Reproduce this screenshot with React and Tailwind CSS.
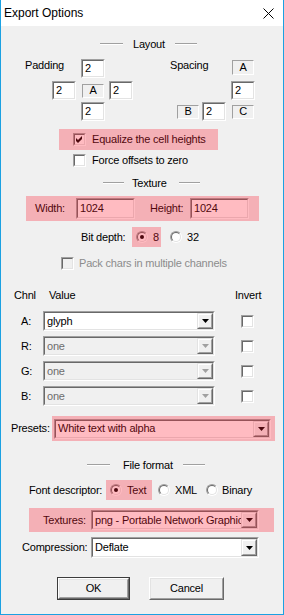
import React from 'react';

const Overlay = () => (
  <div className="pointer-events-none absolute inset-0 bg-[rgba(255,30,50,0.3)]" />
);

const Sunken = ({ className = '', inner = '', children }) => (
  <div className={`shrink-0 border border-t-[#a0a0a0] border-l-[#a0a0a0] border-b-white border-r-white ${className}`}>
    <div className={`flex h-full w-full items-center border border-t-[#696969] border-l-[#696969] border-b-[#e3e3e3] border-r-[#e3e3e3] ${inner}`}>
      {children}
    </div>
  </div>
);

const Edit = ({ value, className = '' }) => (
  <Sunken className={className} inner="bg-white pl-[2px]">
    {value}
  </Sunken>
);

const Tag = ({ label, className = '' }) => (
  <div className={`flex shrink-0 items-center justify-center border border-[#a0a0a0] border-b-white border-r-white ${className}`}>
    {label}
  </div>
);

const Combo = ({ value, disabled, className = '' }) => (
  <Sunken className={className} inner={disabled ? 'bg-[#f0f0f0] text-[#6d6d6d]' : 'bg-white'}>
    <span className="min-w-0 flex-1 overflow-hidden whitespace-nowrap pl-[2px]">{value}</span>
    <div className="h-full w-[16px] shrink-0 border border-t-[#e3e3e3] border-l-[#e3e3e3] border-b-[#696969] border-r-[#696969]">
      <div className="flex h-full w-full items-center justify-center border border-t-white border-l-white border-b-[#a0a0a0] border-r-[#a0a0a0] bg-[#f0f0f0]">
        <svg width="7" height="4" viewBox="0 0 7 4">
          <polygon points="0,0 7,0 3.5,4" fill={disabled ? '#a0a0a0' : '#000'} />
        </svg>
      </div>
    </div>
  </Sunken>
);

const Check = ({ checked, disabled, className = '' }) => (
  <Sunken className={`h-[13px] w-[13px] ${className}`} inner={`justify-center ${disabled ? 'bg-[#f0f0f0]' : 'bg-white'}`}>
    {checked && (
      <svg width="7" height="7" viewBox="0 0 7 7">
        <path d="M0 2 L2 4 L6 0 L6 3 L2 7 L0 5 Z" fill="#000" />
      </svg>
    )}
  </Sunken>
);

const Radio = ({ checked, className = '' }) => (
  <div className={`h-[12px] w-[12px] shrink-0 rounded-full border border-t-[#a0a0a0] border-l-[#a0a0a0] border-b-white border-r-white ${className}`}>
    <div className="flex h-full w-full items-center justify-center rounded-full border border-t-[#696969] border-l-[#696969] border-b-[#e3e3e3] border-r-[#e3e3e3] bg-white">
      {checked && <div className="h-[4px] w-[4px] rounded-full bg-black" />}
    </div>
  </div>
);

const Line = ({ className = '' }) => (
  <div className={`h-[2px] border-t border-b border-t-[#a0a0a0] border-b-white ${className}`} />
);

const channels = [
  { name: 'A:', value: 'glyph', disabled: false },
  { name: 'R:', value: 'one', disabled: true },
  { name: 'G:', value: 'one', disabled: true },
  { name: 'B:', value: 'one', disabled: true },
];

export default function App() {
  return (
    <div className="flex h-[615px] w-[284px] flex-col border-x border-b border-[#1ba1e2] bg-[#f0f0f0] font-['Liberation_Sans',Arial,sans-serif] text-[11px] leading-[13px] tracking-[-0.2px] text-black">
      <div className="flex h-[26px] shrink-0 items-center justify-between bg-white pl-[3px] pr-[9px] text-[12px] tracking-normal">
        <span>Export Options</span>
        <svg width="11" height="11" viewBox="0 0 11 11">
          <path d="M0.5 0.5 L10.5 10.5 M10.5 0.5 L0.5 10.5" stroke="#000" strokeWidth="1" />
        </svg>
      </div>

      {/* Layout */}
      <div className="mt-[11px] flex h-[14px] items-center">
        <Line className="ml-[99px] w-[23px]" />
        <span className="mx-[10px]">Layout</span>
        <Line className="w-[22px]" />
      </div>

      <div className="mt-[8px] flex h-[19px]">
        <span className="ml-[24px] w-[56px]">Padding</span>
        <Edit value="2" className="h-[19px] w-[24px]" />
        <span className="ml-[65px] w-[62px]">Spacing</span>
        <Tag label="A" className="mt-[1px] h-[15px] w-[22px]" />
      </div>
      <div className="mt-[3px] flex h-[19px] items-center">
        <Edit value="2" className="ml-[51px] h-[19px] w-[24px]" />
        <Tag label="A" className="ml-[6px] h-[14px] w-[22px]" />
        <Edit value="2" className="ml-[5px] h-[19px] w-[24px]" />
        <Edit value="2" className="ml-[98px] h-[19px] w-[24px]" />
      </div>
      <div className="mt-[2px] flex h-[19px] items-center">
        <Edit value="2" className="ml-[80px] h-[19px] w-[24px]" />
        <Tag label="B" className="ml-[72px] h-[14px] w-[22px]" />
        <Edit value="2" className="ml-[3px] h-[19px] w-[24px]" />
        <Tag label="C" className="ml-[6px] h-[14px] w-[22px]" />
      </div>

      <div className="relative ml-[58px] mt-[8px] flex h-[21px] w-[159px] items-center">
        <Check checked className="ml-[14px]" />
        <span className="ml-[6px]">Equalize the cell heights</span>
        <Overlay />
      </div>
      <div className="ml-[72px] mt-[3px] flex h-[15px] items-center">
        <Check />
        <span className="ml-[6px]">Force offsets to zero</span>
      </div>

      {/* Texture */}
      <div className="mt-[8px] flex h-[14px] items-center">
        <Line className="ml-[102px] w-[21px]" />
        <span className="ml-[8px] mr-[12px]">Texture</span>
        <Line className="w-[21px]" />
      </div>

      <div className="relative ml-[25px] mt-[6px] flex h-[25px] w-[233px] items-center">
        <span className="ml-[9px] w-[41px]">Width:</span>
        <Edit value="1024" className="h-[21px] w-[59px]" />
        <span className="ml-[15px] w-[40px]">Height:</span>
        <Edit value="1024" className="h-[21px] w-[59px]" />
        <Overlay />
      </div>

      <div className="mt-[6px] flex h-[20px] items-center">
        <span className="ml-[80px] w-[51px]">Bit depth:</span>
        <div className="relative flex h-[20px] w-[29px] items-center">
          <Radio checked className="ml-[4px]" />
          <span className="ml-[5px]">8</span>
          <Overlay />
        </div>
        <Radio className="ml-[9px]" />
        <span className="ml-[5px]">32</span>
      </div>

      <div className="mt-[8px] flex h-[16px] items-center text-[#8c8c8c]">
        <Check disabled className="ml-[60px]" />
        <span className="ml-[5px]">Pack chars in multiple channels</span>
      </div>

      <div className="mt-[17px] flex h-[14px] items-center">
        <span className="ml-[13px] w-[35px]">Chnl</span>
        <span className="w-[186px]">Value</span>
        <span>Invert</span>
      </div>

      {channels.map((c, i) => (
        <div key={c.name} className={`flex h-[20px] items-center ${i === 0 ? 'mt-[9px]' : 'mt-[5px]'}`}>
          <span className="ml-[20px] w-[22px]">{c.name}</span>
          <Combo value={c.value} disabled={c.disabled} className="h-[20px] w-[172px]" />
          <Check className="ml-[26px]" />
        </div>
      ))}

      <div className="mt-[10px] flex h-[25px] items-center">
        <span className="ml-[10px] w-[41px]">Presets:</span>
        <div className="relative flex h-[25px] w-[223px] items-center">
          <Combo value="White text with alpha" className="ml-[2px] h-[20px] w-[217px]" />
          <Overlay />
        </div>
      </div>

      {/* File format */}
      <div className="mt-[17px] flex h-[14px] items-center">
        <Line className="ml-[86px] w-[23px]" />
        <span className="ml-[13px] mr-[10px]">File format</span>
        <Line className="w-[22px]" />
      </div>

      <div className="mt-[8px] flex h-[20px] items-center">
        <span className="ml-[28px] w-[77px]">Font descriptor:</span>
        <div className="relative flex h-[20px] w-[46px] items-center">
          <Radio checked className="ml-[4px]" />
          <span className="ml-[5px]">Text</span>
          <Overlay />
        </div>
        <Radio className="ml-[6px]" />
        <span className="ml-[5px] w-[31px]">XML</span>
        <Radio />
        <span className="ml-[4px]">Binary</span>
      </div>

      <div className="relative ml-[28px] mt-[8px] flex h-[24px] w-[245px] items-center">
        <span className="ml-[14px] w-[48px]">Textures:</span>
        <Combo value="png - Portable Network Graphics" className="h-[20px] w-[168px]" />
        <Overlay />
      </div>

      <div className="mt-[5px] flex h-[21px] items-center">
        <span className="ml-[21px] w-[69px]">Compression:</span>
        <Combo value="Deflate" className="h-[21px] w-[168px]" />
      </div>

      <div className="mt-[19px] flex h-[23px]">
        <div className="ml-[56px] h-[23px] w-[73px] border border-[#3c3c3c]">
          <div className="h-full w-full border border-t-white border-l-white border-b-[#696969] border-r-[#696969]">
            <div className="flex h-full w-full items-center justify-center border border-t-[#e3e3e3] border-l-[#e3e3e3] border-b-[#a0a0a0] border-r-[#a0a0a0]">
              OK
            </div>
          </div>
        </div>
        <div className="ml-[19px] h-[23px] w-[75px] border border-t-white border-l-white border-b-[#696969] border-r-[#696969]">
          <div className="flex h-full w-full items-center justify-center border border-t-[#e3e3e3] border-l-[#e3e3e3] border-b-[#a0a0a0] border-r-[#a0a0a0]">
            Cancel
          </div>
        </div>
      </div>
    </div>
  );
}
